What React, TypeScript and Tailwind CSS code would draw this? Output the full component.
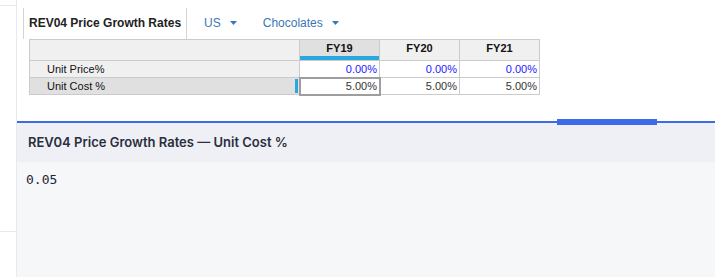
import React from "react";

/* ------------------------------------------------------------------ */
/*  Data                                                               */
/* ------------------------------------------------------------------ */

const years = ["FY19", "FY20", "FY21"];

const rows = [
  { label: "Unit Price%", values: ["0.00%", "0.00%", "0.00%"], selected: false },
  { label: "Unit Cost %", values: ["5.00%", "5.00%", "5.00%"], selected: true },
];

/* ------------------------------------------------------------------ */
/*  Icons                                                              */
/* ------------------------------------------------------------------ */

/** Small filled caret for dropdowns */
function Caret() {
  return (
    <svg width="7" height="4" viewBox="0 0 7 4" className="ml-[9px] mt-[1px]">
      <path d="M0 0h7L3.5 4z" fill="currentColor" />
    </svg>
  );
}

/* ------------------------------------------------------------------ */
/*  Grid                                                               */
/* ------------------------------------------------------------------ */

function GrowthGrid() {
  return (
    <table className="ml-[12px] border-collapse text-[11px] leading-none text-[#111]">
      <thead>
        <tr className="h-[21px]">
          <th className="w-[270px] border border-[#cbcbcb] bg-[#f0f0f0]" />
          {years.map((y, i) => (
            <th
              key={y}
              className={`relative w-[80px] border border-[#cbcbcb] pb-[3px] font-bold ${
                i === 0 ? "bg-[#e0e0e0]" : "bg-[#f0f0f0]"
              }`}
            >
              {y}
              {i === 0 && <span className="absolute bottom-0 left-0 right-0 h-[4px] bg-[#29a8e0]" />}
            </th>
          ))}
        </tr>
      </thead>
      <tbody>
        {rows.map((r) => (
          <tr key={r.label} className="h-[17px]">
            <td
              className={`relative border border-[#cbcbcb] pl-[17px] ${
                r.selected ? "bg-[#e0e0e0]" : "bg-[#f0f0f0]"
              }`}
            >
              {r.label}
              {r.selected && <span className="absolute bottom-[1px] right-[1px] top-[1px] w-[3px] bg-[#29a8e0]" />}
            </td>
            {r.values.map((v, i) => (
              <td
                key={i}
                className={`border border-[#cbcbcb] bg-white pr-[2px] text-right ${
                  r.selected ? "text-[#333]" : "text-[#1a1aff]"
                } ${r.selected && i === 0 ? "outline-2 -outline-offset-1 outline-[#9e9e9e]" : ""}`}
              >
                {v}
              </td>
            ))}
          </tr>
        ))}
      </tbody>
    </table>
  );
}

/* ------------------------------------------------------------------ */
/*  Main                                                               */
/* ------------------------------------------------------------------ */

export default function App() {
  return (
    <div className="flex h-[277px] w-[715px] overflow-hidden bg-white">
      {/* Left rail */}
      <div className="flex w-[17px] shrink-0 flex-col border-r border-[#e6e9f0]">
        <div className="h-[6px] border-b border-[#e6e9f0]" />
        <div className="h-[226px] border-b border-[#e6e9f0]" />
      </div>

      <div className="flex min-w-0 flex-1 flex-col">
        {/* Spreadsheet panel */}
        <div className="h-[121px] font-['Liberation_Sans',Arial,sans-serif]">
          <div className="flex h-[39px] items-end pl-[6px]">
            <div className="flex h-[31px] items-center border-x border-[#d4d4d4] px-[5px] pb-[2px] text-[12px] font-bold text-[#222]">
              REV04 Price Growth Rates
            </div>
            <div className="flex h-[31px] items-center pb-[2px] pl-[17px] text-[12px] text-[#3a78b5]">
              <span className="flex items-center">
                US
                <Caret />
              </span>
              <span className="ml-[26px] flex items-center">
                Chocolates
                <Caret />
              </span>
            </div>
          </div>
          <GrowthGrid />
        </div>

        {/* Detail panel */}
        <div className="relative flex h-[41px] items-center border-t-2 border-[#3d6ae6] bg-[#eef0f5] pl-[11px] font-['Inter',sans-serif] text-[13px] font-semibold text-[#2a2e3d]">
          <span className="absolute left-[540px] top-[-4px] h-[6px] w-[100px] bg-[#3d6ae6]" />
          REV04 Price Growth Rates — Unit Cost %
        </div>
        <div className="flex-1 bg-[#f6f7f9] px-[9px] pt-[8px] font-['DejaVu_Sans_Mono',monospace] text-[13px] text-[#1c2638]">
          0.05
        </div>
      </div>
    </div>
  );
}
